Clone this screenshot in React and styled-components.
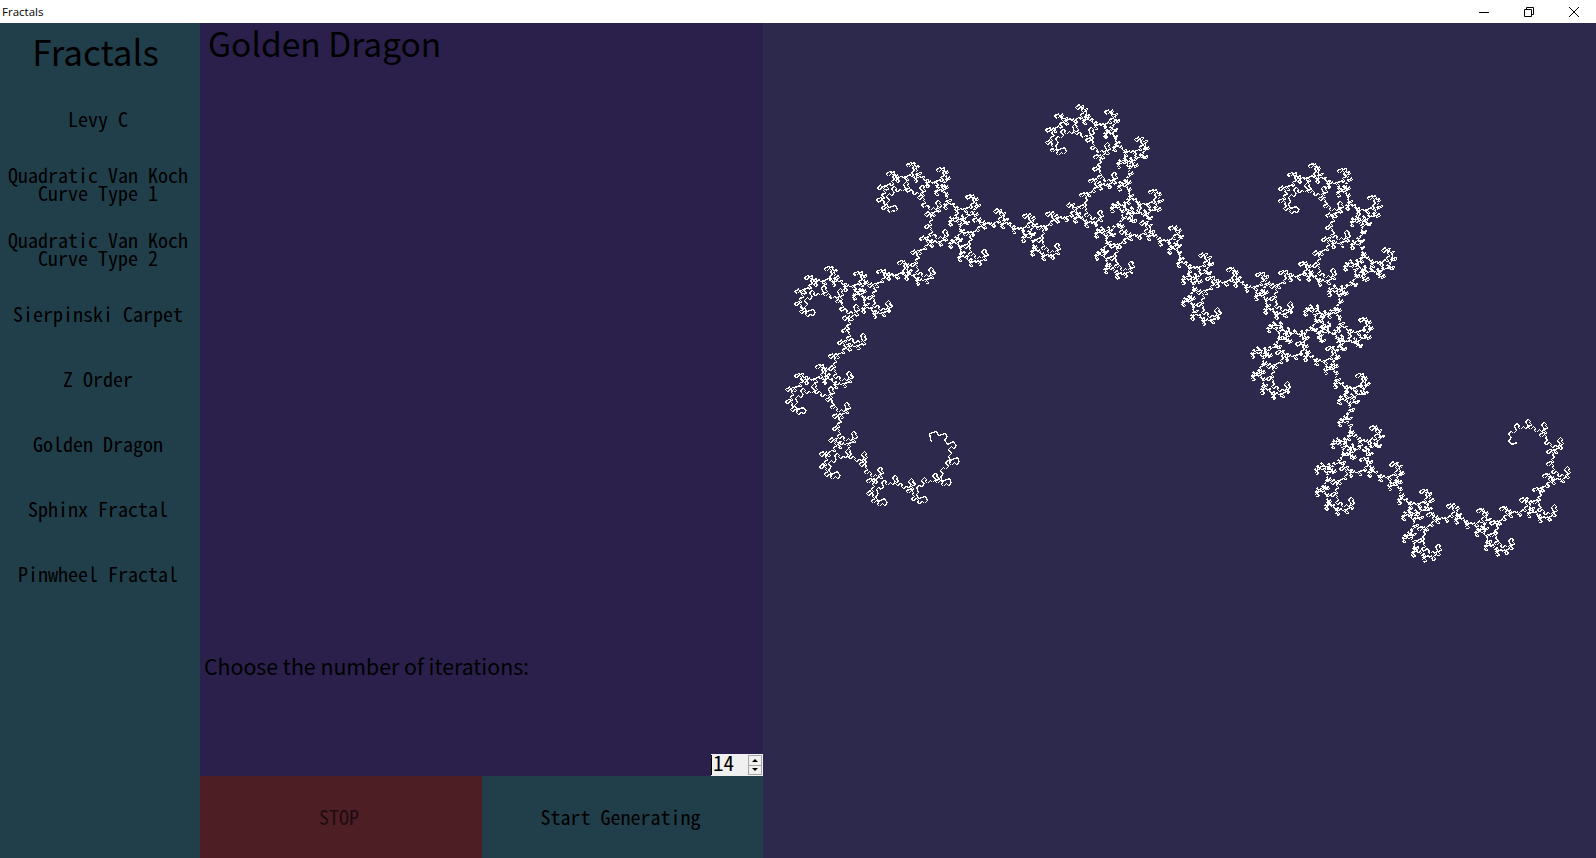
import React, { useMemo } from "react";
import styled, { createGlobalStyle } from "styled-components";

const GlobalStyle = createGlobalStyle`
  html, body {
    margin: 0;
    padding: 0;
    overflow: hidden;
    background: #ffffff;
  }
`;

const gothic = `"Noto Sans CJK JP", "Liberation Sans", sans-serif`;

const Window = styled.div`
  width: 1596px;
  height: 858px;
  display: flex;
  flex-direction: column;
`;

const TitleBar = styled.div`
  height: 23px;
  flex: none;
  display: flex;
  align-items: center;
  justify-content: space-between;
  background: #ffffff;
`;

const TitleText = styled.span`
  padding-left: 2px;
  font-family: "Open Sans", sans-serif;
  font-size: 11.5px;
  color: #000000;
`;

const Captions = styled.div`
  display: flex;
  height: 100%;
`;

const CaptionButton = styled.div`
  width: 45px;
  height: 100%;
  display: flex;
  align-items: center;
  justify-content: center;
`;

const Main = styled.div`
  flex: 1;
  min-height: 0;
  display: flex;
`;

const Sidebar = styled.nav`
  width: 196px;
  padding-right: 4px;
  flex: none;
  display: flex;
  flex-direction: column;
  background: #203f4b;
`;

const Brand = styled.h1`
  margin: 0;
  height: 55px;
  padding: 0 5px 10px 0;
  display: flex;
  align-items: center;
  justify-content: center;
  font-family: ${gothic};
  font-size: 35px;
  font-weight: 400;
  color: #000000;
`;

const TextButton = styled.button`
  border: none;
  padding: 0 4px 1px 0;
  background: ${(p) => p.$bg || "transparent"};
  color: ${(p) => p.$ink || "#000000"};
  font-family: ${gothic};
  font-feature-settings: "hwid";
  font-size: 20px;
  line-height: 18px;
  text-align: center;
  white-space: pre-line;
`;

const NavButton = styled(TextButton)`
  height: 65px;
  flex: none;
  padding: 0 0 4px;
`;

const Controls = styled.section`
  width: 563px;
  flex: none;
  display: flex;
  flex-direction: column;
  background: #2a204b;
`;

const Heading = styled.h2`
  margin: 0;
  padding-left: 8px;
  height: 40px;
  font-family: ${gothic};
  font-size: 33.5px;
  line-height: 39px;
  font-weight: 400;
  color: #000000;
`;

const Prompt = styled.div`
  margin-top: 588px;
  padding-left: 4px;
  font-family: ${gothic};
  font-size: 21.3px;
  line-height: 30px;
  color: #000000;
`;

const Spinner = styled.div`
  margin-top: auto;
  align-self: flex-end;
  width: 52px;
  height: 22px;
  display: flex;
  justify-content: space-between;
  background: #f0f0f0;
`;

const SpinnerValue = styled.div`
  border-left: 1px solid #000000;
  margin: 1px 0;
  padding-left: 1px;
  font-family: ${gothic};
  font-feature-settings: "hwid";
  font-size: 21px;
  line-height: 15px;
  color: #000000;
`;

const SpinnerArrows = styled.div`
  width: 14px;
  margin: 1px 1px 1px 0;
  display: flex;
  flex-direction: column;
  gap: 1px;
  background: #a6a6a6;
  padding: 1px;
  box-sizing: border-box;
`;

const SpinnerArrow = styled.div`
  flex: 1;
  display: flex;
  align-items: center;
  justify-content: center;
  background: #f0f0f0;
  &::before {
    content: "";
    border-left: 3px solid transparent;
    border-right: 3px solid transparent;
    ${(p) => (p.$down ? "border-top: 3px solid #000;" : "border-bottom: 3px solid #000;")}
  }
`;

const ActionRow = styled.div`
  height: 82px;
  flex: none;
  display: grid;
  grid-template-columns: 282px 281px;
`;

const Canvas = styled.main`
  flex: 1;
  min-width: 0;
  background: #2d294c;
`;

const FractalSvg = styled.svg`
  display: block;
  width: 100%;
  height: 100%;
`;

const menuItems = [
  "Levy C",
  "Quadratic Van Koch\nCurve Type 1",
  "Quadratic Van Koch\nCurve Type 2",
  "Sierpinski Carpet",
  "Z Order",
  "Golden Dragon",
  "Sphinx Fractal",
  "Pinwheel Fractal",
];

// golden dragon: triangle with sides 1, r, r^2
const PHI = (1 + Math.sqrt(5)) / 2;
const R = Math.pow(1 / PHI, 1 / PHI);
const ANGLE = Math.acos((1 + R * R - R * R * R * R) / (2 * R));

function dragonPath(start, end, iterations) {
  const parts = [];
  const px = (v) => Math.round(v) + 0.5;
  const step = (a, b, depth) => {
    if (depth === 0) {
      parts.push(`M${px(a[0])} ${px(a[1])}L${px(b[0])} ${px(b[1])}`);
      return;
    }
    const dx = b[0] - a[0];
    const dy = b[1] - a[1];
    const c = Math.cos(-ANGLE) * R;
    const s = Math.sin(-ANGLE) * R;
    const mid = [a[0] + dx * c - dy * s, a[1] + dx * s + dy * c];
    step(a, mid, depth - 1);
    step(b, mid, depth - 1);
  };
  step(start, end, iterations);
  return parts.join("");
}

function Fractal() {
  const d = useMemo(() => dragonPath([931, 442], [1517, 442], 14), []);
  return (
    <FractalSvg viewBox="763 23 833 835">
      <path d={d} fill="none" stroke="#ffffff" strokeWidth="1.3" shapeRendering="crispEdges" />
    </FractalSvg>
  );
}

export default function App() {
  return (
    <Window>
      <GlobalStyle />
      <TitleBar>
        <TitleText>Fractals</TitleText>
        <Captions>
          <CaptionButton>
            <svg width="10" height="10" viewBox="0 0 10 10">
              <path d="M0 5.5H10" stroke="#000" fill="none" />
            </svg>
          </CaptionButton>
          <CaptionButton>
            <svg width="10" height="10" viewBox="0 0 10 10">
              <path d="M0.5 2.5H7.5V9.5H0.5ZM2.5 2.5V0.5H9.5V7.5H7.5" stroke="#000" fill="none" />
            </svg>
          </CaptionButton>
          <CaptionButton>
            <svg width="10" height="10" viewBox="0 0 10 10">
              <path d="M0 0L10 10M10 0L0 10" stroke="#000" fill="none" />
            </svg>
          </CaptionButton>
        </Captions>
      </TitleBar>
      <Main>
        <Sidebar>
          <Brand>Fractals</Brand>
          {menuItems.map((label) => (
            <NavButton key={label}>{label}</NavButton>
          ))}
        </Sidebar>
        <Controls>
          <Heading>Golden Dragon</Heading>
          <Prompt>Choose the number of iterations:</Prompt>
          <Spinner>
            <SpinnerValue>14</SpinnerValue>
            <SpinnerArrows>
              <SpinnerArrow />
              <SpinnerArrow $down />
            </SpinnerArrows>
          </Spinner>
          <ActionRow>
            <TextButton $bg="#4d1f25" $ink="#1f0c0e">STOP</TextButton>
            <TextButton $bg="#203f4b">Start Generating</TextButton>
          </ActionRow>
        </Controls>
        <Canvas>
          <Fractal />
        </Canvas>
      </Main>
    </Window>
  );
}
